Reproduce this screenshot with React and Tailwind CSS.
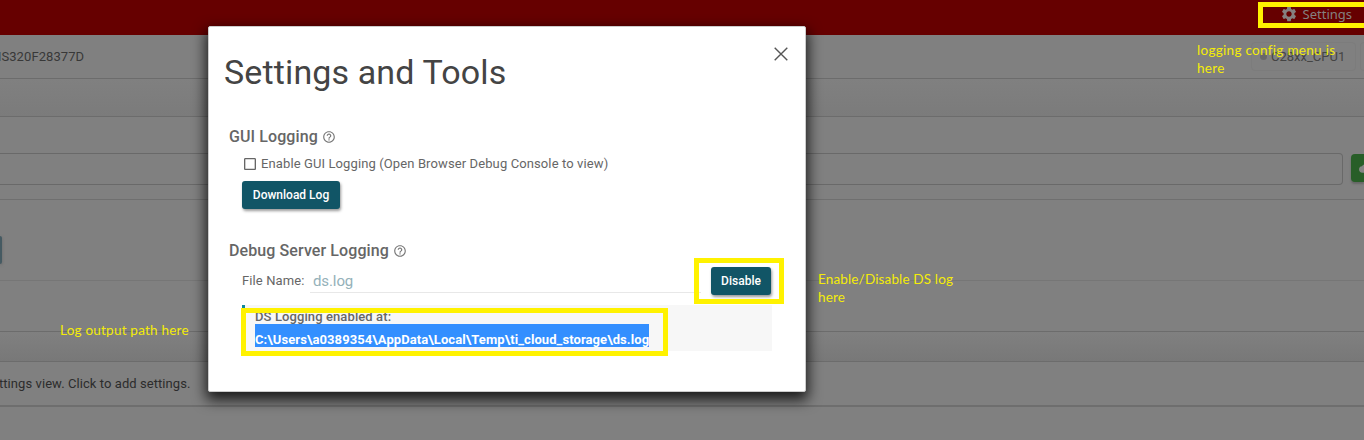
import React from 'react';
import { MdSettings, MdHelpOutline, MdCheckBoxOutlineBlank, MdCloud } from 'react-icons/md';

function TopBar() {
  return (
    <header className="flex h-[35px] items-start justify-end bg-[#660000] pr-3 pt-[5px] text-[#858080]">
      <div className="flex h-[18px] items-center gap-[5px]">
        <MdSettings size={18} />
        <span className="font-['Noto_Sans',sans-serif] text-[13px] leading-[18px]">Settings</span>
      </div>
    </header>
  );
}

function Page() {
  return (
    <div className="flex h-[440px] flex-col bg-[#808080]">
      <TopBar />
      <div className="flex h-11 items-center justify-between border-b border-[#6c6c6c] text-[13px] text-[#383838]">
        <span className="-ml-[10px] tracking-[0.08px]">MS320F28377D</span>
        <div className="flex h-full items-center gap-1">
          <div className="flex h-[29px] w-[105px] items-center gap-1 rounded border border-[#7c7c7c] pl-2 text-[#444]">
            <span className="size-[7px] rounded-full bg-[#686868]" />
            <span>C28xx_CPU1</span>
          </div>
          <div className="h-[29px] w-1 rounded-l border-y border-l border-[#7c7c7c]" />
        </div>
      </div>
      <div className="h-[38px] border-b border-[#6c6c6c] bg-linear-to-b from-[#808080] to-[#7b7b7b]" />
      <div className="flex h-[83px] items-start gap-2 border-b border-[#6f6f6f] pt-9">
        <div className="h-8 w-[1343px] shrink-0 rounded-r border-y border-r border-[#696969]" />
        <div className="mt-px flex h-7 w-[13px] shrink-0 items-center overflow-hidden rounded-l bg-[#285e28] pl-[8px] text-[#858585] shadow-[0_2px_2px_#666]">
          <MdCloud size={13} className="shrink-0" />
        </div>
      </div>
      <div className="flex h-[81px] items-center border-b border-[#767676] pt-5">
        <div className="h-7 w-0.5 rounded-r bg-[#455a62] shadow-[0_1px_3px_#666]" />
      </div>
      <div className="h-[51px] border-b border-[#6c6c6c]" />
      <div className="h-[30px] border-b border-[#6c6c6c] bg-linear-to-b from-[#808080] to-[#787878]" />
      <div className="flex h-[45px] items-center border-b-2 border-[#6e6e6e] text-[13px] text-[#2c2c2c]">
        <span className="-ml-[8px] tracking-[0.07px]">ettings view. Click to add settings.</span>
      </div>
    </div>
  );
}

function SectionTitle({ children }) {
  return (
    <h2 className="flex h-5 items-center gap-1 text-[16px] font-medium leading-5 tracking-[0.1px] text-[#666]">
      <span>{children}</span>
      <MdHelpOutline size={14} className="text-[#777]" />
    </h2>
  );
}

function ActionButton({ children, className }) {
  return (
    <button className={`h-7 rounded-[3px] bg-[#115566] text-[12px] font-medium text-white shadow-[1px_2px_3px_rgba(0,0,0,0.4)] ${className}`}>
      {children}
    </button>
  );
}

function SettingsDialog() {
  return (
    <section className="absolute left-[208px] top-[26px] flex h-[366px] w-[598px] flex-col rounded-[2px] border border-[#ccc] bg-white pl-[15px] text-[#666] shadow-[0_6px_14px_2px_rgba(0,0,0,0.8)]">
      <div className="flex h-[100px] items-start justify-between pr-[17px]">
        <h1 className="pt-[24px] text-[34px] leading-[42px] tracking-[0.13px] text-[#444]">Settings and Tools</h1>
        <svg className="mt-[20px]" width="14" height="14" viewBox="0 0 14 14" stroke="#555" strokeWidth="1.4" fill="none">
          <path d="M.7.7 13.3 13.3M13.3.7.7 13.3" />
        </svg>
      </div>
      <div className="pl-[5px]">
        <SectionTitle>GUI Logging</SectionTitle>
        <div className="pl-[13px]">
          <div className="mt-[7px] flex h-5 items-center gap-[3px] text-[13px]">
            <MdCheckBoxOutlineBlank size={16} />
            <span className="tracking-[0.11px]">Enable GUI Logging (Open Browser Debug Console to view)</span>
          </div>
          <ActionButton className="mt-[7px] w-[98px]">Download Log</ActionButton>
        </div>
        <div className="mt-8">
          <SectionTitle>Debug Server Logging</SectionTitle>
        </div>
        <div className="mt-[6px] flex h-7 items-start pl-[13px] text-[13px]">
          <span className="w-[68px] leading-7 tracking-[0.1px]">File Name:</span>
          <span className="h-[26px] w-[391px] border-b border-[#e8e8e8] pl-[3px] text-[15px] leading-[28px] tracking-[-0.1px] text-[#94b1b9]">ds.log</span>
          <ActionButton className="ml-[10px] w-[60px]">Disable</ActionButton>
        </div>
        <div className="ml-[13px] mt-[10px] h-[46px] w-[530px] border-l-[3px] border-[#118899] bg-[#f7f7f7] pl-[10px] text-[13px] font-medium">
          <div className="h-[19px] pt-[2px] leading-[19px] tracking-[0.1px]">DS Logging enabled at:</div>
          <div className="h-[23px] w-[394px] whitespace-nowrap bg-[#338fff] pt-[5px] font-bold leading-[22px] tracking-[0.075px] text-white">
            C:\Users\a0389354\AppData\Local\Temp\ti_cloud_storage\ds.log
          </div>
        </div>
      </div>
    </section>
  );
}

const noteText = "absolute font-[Lato,sans-serif] text-[13.5px] leading-[18px] text-[#f4ec08] whitespace-nowrap";

export default function App() {
  return (
    <main className="relative h-[440px] w-[1364px] overflow-hidden font-[Roboto,sans-serif]">
      <Page />
      <SettingsDialog />
      <div className="absolute left-[1258px] top-[2px] h-[26px] w-[120px] border-[5px] border-[#fff200]" />
      <div className="absolute left-[694px] top-[258px] h-[46px] w-[90px] border-[5px] border-[#fff200]" />
      <div className="absolute left-[241px] top-[308px] h-[48px] w-[427px] border-[5px] border-[#fff200]" />
      <p className={`${noteText} left-[1197px] top-[41px] tracking-[0.3px]`}>logging config menu is<br />here</p>
      <p className={`${noteText} left-[818px] top-[270px] tracking-[0.15px]`}>Enable/Disable DS log<br />here</p>
      <p className={`${noteText} left-[60px] top-[321px] tracking-[0.22px]`}>Log output path here</p>
    </main>
  );
}
